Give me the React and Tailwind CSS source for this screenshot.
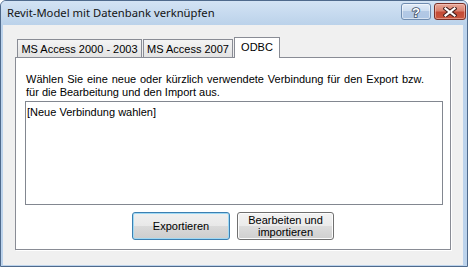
export default function App() {
  return (
    <div className="w-[470px] h-[269px] bg-white font-['Liberation_Sans',Arial,sans-serif] text-[11px] leading-[13px] text-black">
      <div className="w-[468px] h-[267px] flex flex-col border border-[#4f6a8c] rounded-t-[6px] overflow-hidden bg-[#bcd3ec]">
        {/* title bar */}
        <div className="h-[24px] shrink-0 flex items-start bg-[linear-gradient(#d3e3f4,#bbd2ea)]">
          <span className="ml-[6px] mt-[4px] font-['Noto_Sans',sans-serif] text-[11.25px] leading-[16px] text-[#141414] whitespace-nowrap">
            Revit-Model mit Datenbank verknüpfen
          </span>
          <div className="ml-auto mt-[2px] mr-[1px] flex gap-[3px]">
            <div className="w-[30px] h-[17px] rounded-[3px] border border-[#6f8cb0] bg-[linear-gradient(#e2ecf8_0%,#cbdcf0_50%,#b3c9e5_50%,#aec6e4_100%)] shadow-[inset_0_0_0_1px_rgba(255,255,255,0.5)] flex items-center justify-center">
              <svg width="12" height="14" viewBox="0 0 12 14">
                <text x="6" y="12" textAnchor="middle" fontFamily="'Liberation Sans',Arial,sans-serif" fontWeight="700" fontSize="13" fill="#ffffff" stroke="#3d4f68" strokeWidth="1.6" paintOrder="stroke">?</text>
              </svg>
            </div>
            <div className="w-[32px] h-[17px] rounded-[3px] border border-[#7a3128] bg-[linear-gradient(#e9a99a_0%,#d9826f_45%,#c44b36_55%,#c9573f_100%)] shadow-[inset_0_0_0_1px_rgba(255,220,210,0.45)] flex items-center justify-center">
              <svg width="14" height="10" viewBox="0 0 14 10">
                <path d="M2.5 1.5 L11.5 8.5 M11.5 1.5 L2.5 8.5" stroke="#4a2420" strokeWidth="4.2" strokeLinecap="square" />
                <path d="M2.5 1.5 L11.5 8.5 M11.5 1.5 L2.5 8.5" stroke="#ffffff" strokeWidth="2.2" strokeLinecap="square" />
              </svg>
            </div>
          </div>
        </div>

        {/* client area */}
        <div className="flex-1 ml-[2px] mr-[4px] mb-[1px] bg-[#f0f0f0] flex flex-col px-[12px] pt-[12px] pb-[15px]">
          {/* tabs */}
          <div className="h-[20px] shrink-0 flex items-end pl-[2px] relative z-10">
            <div className="w-[125px] h-[18px] border border-b-0 border-[#898c95] bg-[linear-gradient(#f4f4f4,#e3e3e3)] flex items-center justify-center pt-[1px] whitespace-nowrap">
              MS Access 2000 - 2003
            </div>
            <div className="ml-[1px] w-[90px] h-[18px] border border-b-0 border-[#898c95] bg-[linear-gradient(#f4f4f4,#e3e3e3)] flex items-center justify-center pt-[1px] whitespace-nowrap">
              MS Access 2007
            </div>
            <div className="ml-[1px] w-[46px] h-[21px] -mb-px border border-b-0 border-[#898c95] bg-white flex items-center justify-center pb-[1px] whitespace-nowrap">
              ODBC
            </div>
          </div>

          {/* panel */}
          <div className="flex-1 border border-[#898c95] bg-white shadow-[1px_1px_0_#ffffff] flex flex-col pl-[9px] pr-[7px] pt-[15px]">
            <div className="pl-[1px]">
              <div className="w-[398px] text-justify [text-align-last:justify] whitespace-nowrap">
                Wählen Sie eine neue oder kürzlich verwendete Verbindung für den Export bzw.
              </div>
              <div className="whitespace-nowrap">für die Bearbeitung und den Import aus.</div>
            </div>

            <div className="mt-[2px] w-[418px] h-[104px] border border-[#828790] bg-white pt-[4px] pl-[1px]">
              [Neue Verbindung wahlen]
            </div>

            <div className="mt-[7px] flex justify-center gap-[7px] pr-[2px]">
              <button className="w-[98px] h-[28px] rounded-[3px] border border-[#3c7fb1] bg-[linear-gradient(#f0f0f0_0%,#e8e8e8_50%,#dadada_50%,#cdcdcd_100%)] shadow-[inset_0_0_0_1px_#9fd9f4] flex items-center justify-center">
                Exportieren
              </button>
              <button className="w-[97px] h-[28px] rounded-[3px] border border-[#707070] bg-[linear-gradient(#f2f2f2_0%,#ebebeb_50%,#dddddd_50%,#cfcfcf_100%)] shadow-[inset_0_0_0_1px_#fcfcfc] flex flex-col items-center justify-center leading-[12px]">
                <span>Bearbeiten und</span>
                <span>importieren</span>
              </button>
            </div>
          </div>
        </div>
      </div>
    </div>
  );
}
